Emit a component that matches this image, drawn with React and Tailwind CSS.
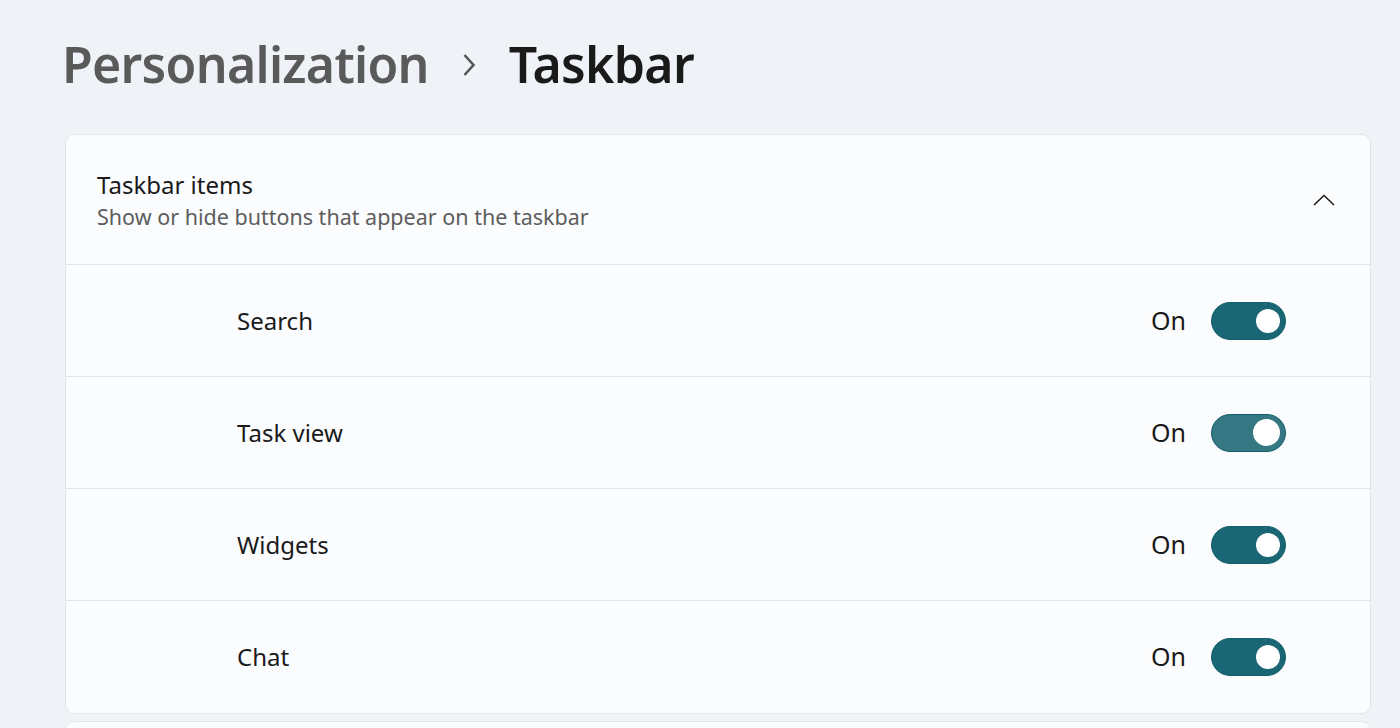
const items = [
    { label: 'Search', hover: false },
    { label: 'Task view', hover: true },
    { label: 'Widgets', hover: false },
    { label: 'Chat', hover: false },
];

const Toggle = ({ hover }) => (
    <div
        className={`flex items-center justify-end w-[75px] h-[38px] rounded-full border border-[#145f6d] pr-[5px] ${
            hover ? 'bg-[#357783]' : 'bg-[#1b6674]'
        }`}
    >
        <div
            className={`rounded-full bg-white ${
                hover ? 'w-[27px] h-[27px]' : 'w-[24px] h-[24px]'
            }`}
        />
    </div>
);

const App = () => {
    return (
        <div
            className="w-[1400px] h-[728px] overflow-hidden bg-[#eff3f8] text-[#1a1a1a]"
            style={{ fontFamily: '"Noto Sans", "Open Sans", sans-serif' }}
        >
            <div className="flex items-center pl-[62px] pt-[26px] h-[134px] pb-[32px]">
                <span className="text-[50px] font-semibold text-[#5a5a5a] tracking-[-0.7px]">
                    Personalization
                </span>
                <svg
                    width="14"
                    height="24"
                    viewBox="0 0 14 24"
                    className="ml-[33px] mr-[33px] mt-[2px]"
                >
                    <path
                        d="M2.5 2 L11.5 12 L2.5 22"
                        fill="none"
                        stroke="#555"
                        strokeWidth="2.6"
                    />
                </svg>
                <span className="text-[50px] font-semibold text-[#1a1a1a] tracking-[-0.7px]">
                    Taskbar
                </span>
            </div>

            <div className="ml-[65px] mr-[29px] rounded-[9px] border border-[#e1e6eb] bg-[#fbfcfd]">
                <div className="flex items-center justify-between h-[130px] pl-[31px] pr-[35px] pt-[3px] border-b border-[#e1e6eb]">
                    <div className="flex flex-col">
                        <span className="text-[24px] leading-[32px] text-[#1a1a1a]">
                            Taskbar items
                        </span>
                        <span className="text-[21.5px] leading-[32px] text-[#5d5d5d]">
                            Show or hide buttons that appear on the taskbar
                        </span>
                    </div>
                    <svg width="22" height="12" viewBox="0 0 22 12" className="-mt-[3px]">
                        <path
                            d="M1 11 L11 1.5 L21 11"
                            fill="none"
                            stroke="#1a1a1a"
                            strokeWidth="1.5"
                        />
                    </svg>
                </div>
                {items.map((item, index) => (
                    <div
                        key={item.label}
                        className={`flex items-center justify-between h-[112px] pl-[171px] pr-[84px] ${
                            index < items.length - 1 ? 'border-b border-[#e1e6eb]' : ''
                        }`}
                    >
                        <span className="text-[24px]">{item.label}</span>
                        <div className="flex items-center gap-[25px]">
                            <span className="text-[25px]">On</span>
                            <Toggle hover={item.hover} />
                        </div>
                    </div>
                ))}
            </div>
            <div className="ml-[65px] mr-[29px] mt-[7px] h-[40px] rounded-[9px] border border-[#e1e6eb] bg-[#fbfcfd]" />
        </div>
    );
};

export default App;
